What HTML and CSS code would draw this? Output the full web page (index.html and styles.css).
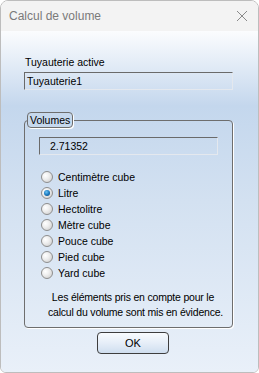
FILE: index.html
```html
<!DOCTYPE html>
<html>
<head>
    <title>Calcul de volume</title>
    <link rel="stylesheet" href="styles.css">
</head>
<body>
    <div class="window">
        <div class="titlebar">
            <span class="title">Calcul de volume</span>
            <svg class="close" width="12" height="12" viewBox="0 0 12 12">
                <path d="M1 1 L11 11 M11 1 L1 11" stroke="#8a8a8a" stroke-width="1" fill="none"/>
            </svg>
        </div>

        <div class="client">
            <div class="label">Tuyauterie active</div>
            <div class="field">Tuyauterie1</div>

            <fieldset class="group">
                <legend>Volumes</legend>
                <div class="group-body">
                    <div class="field value">2.71352</div>

                    <div class="radios">
                        <div class="radio-row"><span class="radio"></span>Centimètre cube</div>
                        <div class="radio-row"><span class="radio checked"></span>Litre</div>
                        <div class="radio-row"><span class="radio"></span>Hectolitre</div>
                        <div class="radio-row"><span class="radio"></span>Mètre cube</div>
                        <div class="radio-row"><span class="radio"></span>Pouce cube</div>
                        <div class="radio-row"><span class="radio"></span>Pied cube</div>
                        <div class="radio-row"><span class="radio"></span>Yard cube</div>
                    </div>

                    <p class="note">Les éléments pris en compte pour le<br>calcul du volume sont mis en évidence.</p>
                </div>
            </fieldset>

            <div class="buttons">
                <button type="button">OK</button>
            </div>
        </div>
    </div>
</body>
</html>
```

FILE: styles.css
```css
html, body {
    margin: 0;
    padding: 0;
    background: #ffffff;
}

body {
    font-family: "Liberation Sans", Arial, sans-serif;
    font-size: 10.5px;
    color: #000000;
}

.window {
    width: 259px;
    height: 373px;
    box-sizing: border-box;
    border: 1px solid #bdbdbd;
    border-radius: 8px 8px 6px 6px;
    overflow: hidden;
    display: flex;
    flex-direction: column;
}

.titlebar {
    height: 30px;
    flex: none;
    background: #f3f3f3;
    display: flex;
    align-items: center;
    justify-content: space-between;
    padding: 0 10px 0 8px;
}

.title {
    font-size: 12px;
    color: #7a7a7a;
    padding-bottom: 1px;
}

.close {
    display: block;
    margin-bottom: 1px;
}

.client {
    flex: 1;
    padding: 24px 25px 0 23px;
    background: linear-gradient(to bottom, #fbfcfe 0%, #c4d7ed 22%, #d3e1f1 50%, #e9f0f9 100%);
}

.label {
    height: 14px;
    line-height: 14px;
    padding-left: 1px;
}

.field {
    height: 18px;
    line-height: 16px;
    box-sizing: border-box;
    margin-top: 3px;
    padding-left: 2px;
    border-top: 1px solid #6a6a6a;
    border-left: 1px solid #6a6a6a;
    border-bottom: 1px solid #e4e8ee;
    border-right: 1px solid #e4e8ee;
}

.group {
    margin: 22px 0 0 0;
    padding: 0 0 7px 0;
    border: 1px solid #6e6e6e;
    border-radius: 4px;
    box-shadow: 1px 1px 0 #ffffff;
    min-width: 0;
}

.group legend {
    margin-left: 2px;
    padding: 0 2px;
    height: 14px;
    line-height: 14px;
    border: 1px solid #6e6e6e;
    border-radius: 4px;
    background: #c6d8ed;
    box-shadow: 1px 1px 0 #ffffff;
}

.group-body {
    padding: 0 14px;
}

.value {
    margin-top: 9px;
    padding-left: 10px;
}

.radios {
    margin-top: 14px;
    padding-left: 2px;
}

.radio-row {
    height: 16px;
    display: flex;
    align-items: center;
    gap: 5px;
}

.radio {
    width: 12px;
    height: 12px;
    box-sizing: border-box;
    border-radius: 50%;
    border: 1px solid #8e8e8e;
    background: radial-gradient(circle at 35% 35%, #ffffff 0%, #eeeeee 40%, #c8c8c8 100%);
    position: relative;
}

.radio.checked::after {
    content: "";
    position: absolute;
    left: 2px;
    top: 2px;
    width: 6px;
    height: 6px;
    border-radius: 50%;
    background: radial-gradient(circle at 40% 35%, #6cc3f5 0%, #1b7cc2 50%, #0c3f6e 100%);
}

.note {
    margin: 9px 0 0 0;
    padding-left: 9px;
    text-align: center;
    line-height: 15px;
    white-space: nowrap;
    letter-spacing: -0.2px;
}

.buttons {
    display: flex;
    justify-content: center;
    padding-left: 9px;
    margin-top: 4px;
}

button {
    width: 72px;
    height: 22px;
    border: 1px solid #3e3e3e;
    border-radius: 4px;
    background: linear-gradient(to bottom, #f8fbfe 0%, #e6eef8 50%, #cfdeef 100%);
    font-family: "Liberation Sans", Arial, sans-serif;
    font-size: 11px;
    color: #000000;
    padding: 0;
}
```
